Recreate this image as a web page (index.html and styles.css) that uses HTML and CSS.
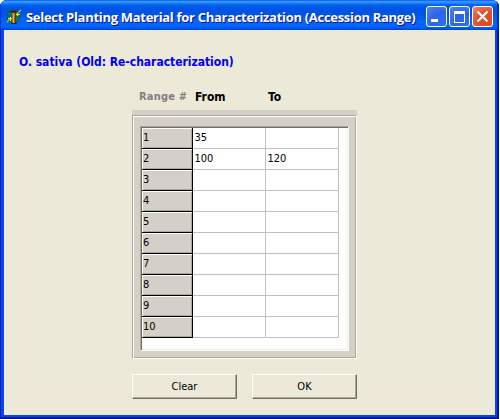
FILE: index.html
```html
<!DOCTYPE html>
<html lang="en">
<head>
<meta charset="utf-8">
<title>Select Planting Material</title>
<link rel="stylesheet" href="styles.css">
</head>
<body>
<div class="window">
  <header class="titlebar">
    <svg class="app-icon" width="16" height="16" viewBox="0 0 16 16">
      <path d="M4 1h7l3 3v6l-3 4H4l-3-4V4z" fill="#08756c"/>
      <path d="M1.500 10V4.500L4.500 1.500h6L13.500 5v5l-3 3.500h-6z" fill="none" stroke="#12504f"/>
      <path d="m1 13 3-3M11 5l4-4" fill="none" stroke="#c9b418" stroke-width="1.200"/>
      <path d="M6 3h4v12H6z" fill="#5a3408"/>
      <path d="M7.500 4v10" stroke="#e2ad52" stroke-width="2"/>
      <path d="M4 2.500h7M5 14.500h6" stroke="#402000"/>
      <path d="M2 9.500h4M4.500 8v4M10 5.500h4M11.500 4v3" stroke="#e8ee20"/>
    </svg>
    <h1 class="title">Select Planting Material for Characterization (Accession Range)</h1>
    <div class="controls">
      <span class="control"><svg width="19" height="19" viewBox="0 0 19 19"><path d="M4 12h7v3H4z" fill="#fff"/></svg></span>
      <span class="control"><svg width="19" height="19" viewBox="0 0 19 19"><path d="M4 4h11v12H4zM5 7v8h9V7z" fill="#fff" fill-rule="evenodd"/></svg></span>
      <span class="control close"><svg width="19" height="19" viewBox="0 0 19 19"><path d="m4.500 4.500 10 10m0-10-10 10" stroke="#fff" stroke-width="2.200"/></svg></span>
    </div>
  </header>
  <main class="client">
    <h2 class="subject"><span>O. sativa (Old: Re-characterization)</span></h2>
    <div class="headings"><span class="muted">Range #</span><span class="from">From</span><span class="to">To</span></div>
    <section class="panel">
      <div class="etched">
        <div class="grid">
          <div class="row"><b>1</b><span>35</span><span></span></div>
          <div class="row"><b>2</b><span>100</span><span>120</span></div>
          <div class="row"><b>3</b><span></span><span></span></div>
          <div class="row"><b>4</b><span></span><span></span></div>
          <div class="row"><b>5</b><span></span><span></span></div>
          <div class="row"><b>6</b><span></span><span></span></div>
          <div class="row"><b>7</b><span></span><span></span></div>
          <div class="row"><b>8</b><span></span><span></span></div>
          <div class="row"><b>9</b><span></span><span></span></div>
          <div class="row"><b>10</b><span></span><span></span></div>
        </div>
      </div>
    </section>
    <div class="actions"><button>Clear</button><button>OK</button></div>
  </main>
</div>
</body>
</html>
```
FILE: styles.css
```css
* { box-sizing: border-box; }
body { margin: 0; background: #fff; overflow: hidden; font: 11px/13px "DejaVu Sans Condensed", "DejaVu Sans", sans-serif; font-stretch: condensed; color: #000; }
.window { width: 499px; height: 419px; display: flex; flex-direction: column; background: #0847e0; border-radius: 7px 7px 0 0; overflow: hidden; box-shadow: inset 1px 0 #0019cf, inset -1px -1px #00138c, inset -2px -2px #001ea0; }
.titlebar { height: 30px; flex: none; display: flex; align-items: center; padding: 3px 6px 0 6px; background: linear-gradient(#0058e6 0, #3a93ff 1.500px, #288eff 2.500px, #0262ee 5px, #0054e3 8px, #0055e5 14px, #0066ff 22px, #0066ff 26px, #005bf0 28px, #003dd7 30px); box-shadow: inset 1px 0 #0831d9, inset -2px 0 #0030bd; }
.app-icon { flex: none; }
.title { margin: 1px 0 0 4px; width: 394px; color: #fff; font: bold 13px/18px "Open Sans", sans-serif; white-space: nowrap; text-shadow: 1px 1px #0f1089; letter-spacing: -0.300px; }
.controls { display: flex; flex: none; gap: 2px; margin-left: auto; }
.control { width: 21px; height: 21px; border: 1px solid #fff; border-radius: 3px; background: radial-gradient(circle at 80% 85%, #326cf5, #2b63e8 45%, #5484ed 100%); }
.control svg { display: block; }
.close { background: radial-gradient(circle at 75% 80%, #e04a20, #dc5030 50%, #ea8c72 100%); }
.client { height: 385px; margin: 0 4px; background: #ece9d8; display: flex; flex-direction: column; }
.subject { margin: 24px 0 0 15px; height: 16px; color: #0000f0; font: bold 12px/17px "DejaVu Sans Condensed", sans-serif; white-space: nowrap; letter-spacing: -0.020px; }
.headings { display: grid; grid-template-columns: 56px 73px 60px; margin: 18px 0 0 135px; height: 22px; line-height: 18px; font-size: 12px; font-weight: bold; white-space: nowrap; }
.muted { color: #808080; font-size: 11px; letter-spacing: 0.200px; }
.panel { width: 225px; height: 249px; margin-left: 128px; padding-top: 5px; background: #d4d0c8; }
.etched { height: 244px; border: 1px solid #aca899; border-right-color: #fff; border-bottom-color: #fff; box-shadow: inset 1px 1px #fff, inset -1px -1px #aca899; padding: 10px 7px 7px; }
.grid { width: 209px; height: 225px; background: #fff; border: 1px solid; border-color: #aca899 #fff #fff #aca899; box-shadow: inset 1px 1px #716f64, inset -1px -1px #f1efe2; padding: 1px; }
.row { display: grid; grid-template-columns: 51px 73px 73px; width: 197px; height: 21px; line-height: 19px; }
.row b { font-weight: normal; background: #d4d0c8; border: solid #000; border-width: 0 1px 1px 0; box-shadow: inset 1px 1px #fff, inset -1px -1px #aca899; padding-left: 1px; }
.row span { border: solid #c0c0c0; border-width: 0 1px 1px 0; padding-left: 1.500px; }
.actions { display: flex; gap: 15px; margin: 15px 0 0 128px; }
button { width: 105px; height: 25px; padding: 0 0 1px; font: inherit; color: #000; background: #ece9d8; border: 1px solid; border-color: #fff #716f64 #716f64 #fff; box-shadow: inset -1px -1px #aca899; }
```
